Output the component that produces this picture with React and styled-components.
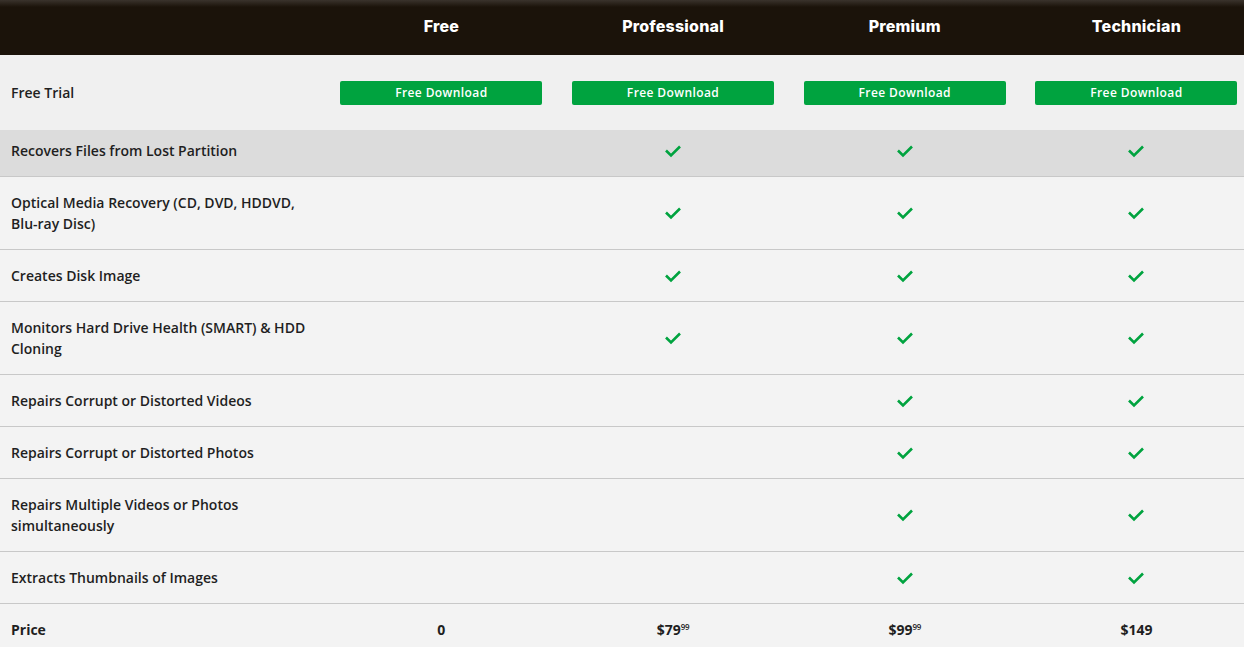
import React from "react";
import styled, { createGlobalStyle } from "styled-components";

const GlobalStyle = createGlobalStyle`
  html, body {
    margin: 0;
    padding: 0;
    background: #f3f3f3;
    overflow: hidden;
  }
  body {
    font-family: "Open Sans", "Noto Sans", sans-serif;
  }
`;

// styles
const Table = styled.div`
  display: grid;
  grid-template-columns: 325.5px repeat(4, 231.7px);
  width: 1252px;
`;
const HeadCell = styled.div`
  height: 55px;
  display: flex;
  align-items: center;
  justify-content: center;
  background: linear-gradient(to bottom, #3a332c 0px, #1b130a 7px, #1b130a 100%);
  color: #fff;
  font-family: Inter, "Open Sans", sans-serif;
  font-weight: 800;
  font-size: 16px;
  letter-spacing: 0.2px;
  padding-bottom: 4px;
  box-sizing: border-box;
`;
const Cell = styled.div`
  display: flex;
  align-items: center;
  justify-content: ${(props) => (props.label ? "flex-start" : "center")};
  padding: ${(props) =>
    props.tall ? "0 11px" : props.shade ? "10px 11px 15px" : "15px 11px"};
  height: ${(props) => (props.tall ? "75px" : "auto")};
  box-sizing: border-box;
  background: ${(props) =>
    props.tall ? "#f0f0f0" : props.shade ? "#dcdcdc" : "#f3f3f3"};
  border-bottom: ${(props) =>
    props.last || props.tall ? "none" : "1px solid #c8c8c8"};
  color: #1f1f1f;
  font-size: 14px;
  font-weight: ${(props) => (props.bold ? 700 : 600)};
  line-height: 21px;
`;
const DownloadButton = styled.a`
  display: flex;
  align-items: center;
  justify-content: center;
  flex: 0 0 202px;
  height: 24px;
  background: #00a33f;
  border-radius: 2px;
  color: #fff;
  font-size: 12px;
  font-weight: 600;
  letter-spacing: 0.4px;
  text-decoration: none;
`;
const Cents = styled.sup`
  font-size: 8px;
  font-weight: 600;
  vertical-align: top;
  line-height: 15px;
  letter-spacing: -0.4px;
`;

const plans = ["Free", "Professional", "Premium", "Technician"];

const features = [
  { name: "Recovers Files from Lost Partition", on: [0, 1, 1, 1] },
  { name: "Optical Media Recovery (CD, DVD, HDDVD, Blu-ray Disc)", on: [0, 1, 1, 1] },
  { name: "Creates Disk Image", on: [0, 1, 1, 1] },
  { name: "Monitors Hard Drive Health (SMART) & HDD Cloning", on: [0, 1, 1, 1] },
  { name: "Repairs Corrupt or Distorted Videos", on: [0, 0, 1, 1] },
  { name: "Repairs Corrupt or Distorted Photos", on: [0, 0, 1, 1] },
  { name: "Repairs Multiple Videos or Photos simultaneously", on: [0, 0, 1, 1] },
  { name: "Extracts Thumbnails of Images", on: [0, 0, 1, 1] },
];

const prices = [
  ["0", null],
  ["$79", "99"],
  ["$99", "99"],
  ["$149", null],
];

function Check() {
  return (
    <svg width="18" height="14" viewBox="0 0 18 14">
      <polyline
        points="2,6.5 7,11.5 16,2.5"
        fill="none"
        stroke="#00a33f"
        strokeWidth="2.6"
      />
    </svg>
  );
}

export default function App() {
  return (
    <>
      <GlobalStyle />
      <Table>
        <HeadCell />
        {plans.map((p) => (
          <HeadCell key={p}>{p}</HeadCell>
        ))}

        <Cell label tall>Free Trial</Cell>
        {plans.map((p) => (
          <Cell key={p} tall>
            <DownloadButton href="#">Free Download</DownloadButton>
          </Cell>
        ))}

        {features.map((f, i) => (
          <React.Fragment key={f.name}>
            <Cell label shade={i === 0}>
              {f.name}
            </Cell>
            {f.on.map((v, j) => (
              <Cell key={j} shade={i === 0}>
                {v ? <Check /> : null}
              </Cell>
            ))}
          </React.Fragment>
        ))}

        <Cell label bold last>Price</Cell>
        {prices.map(([main, cents], j) => (
          <Cell key={j} bold last>
            <span>
              {main}
              {cents ? <Cents>{cents}</Cents> : null}
            </span>
          </Cell>
        ))}
      </Table>
    </>
  );
}
